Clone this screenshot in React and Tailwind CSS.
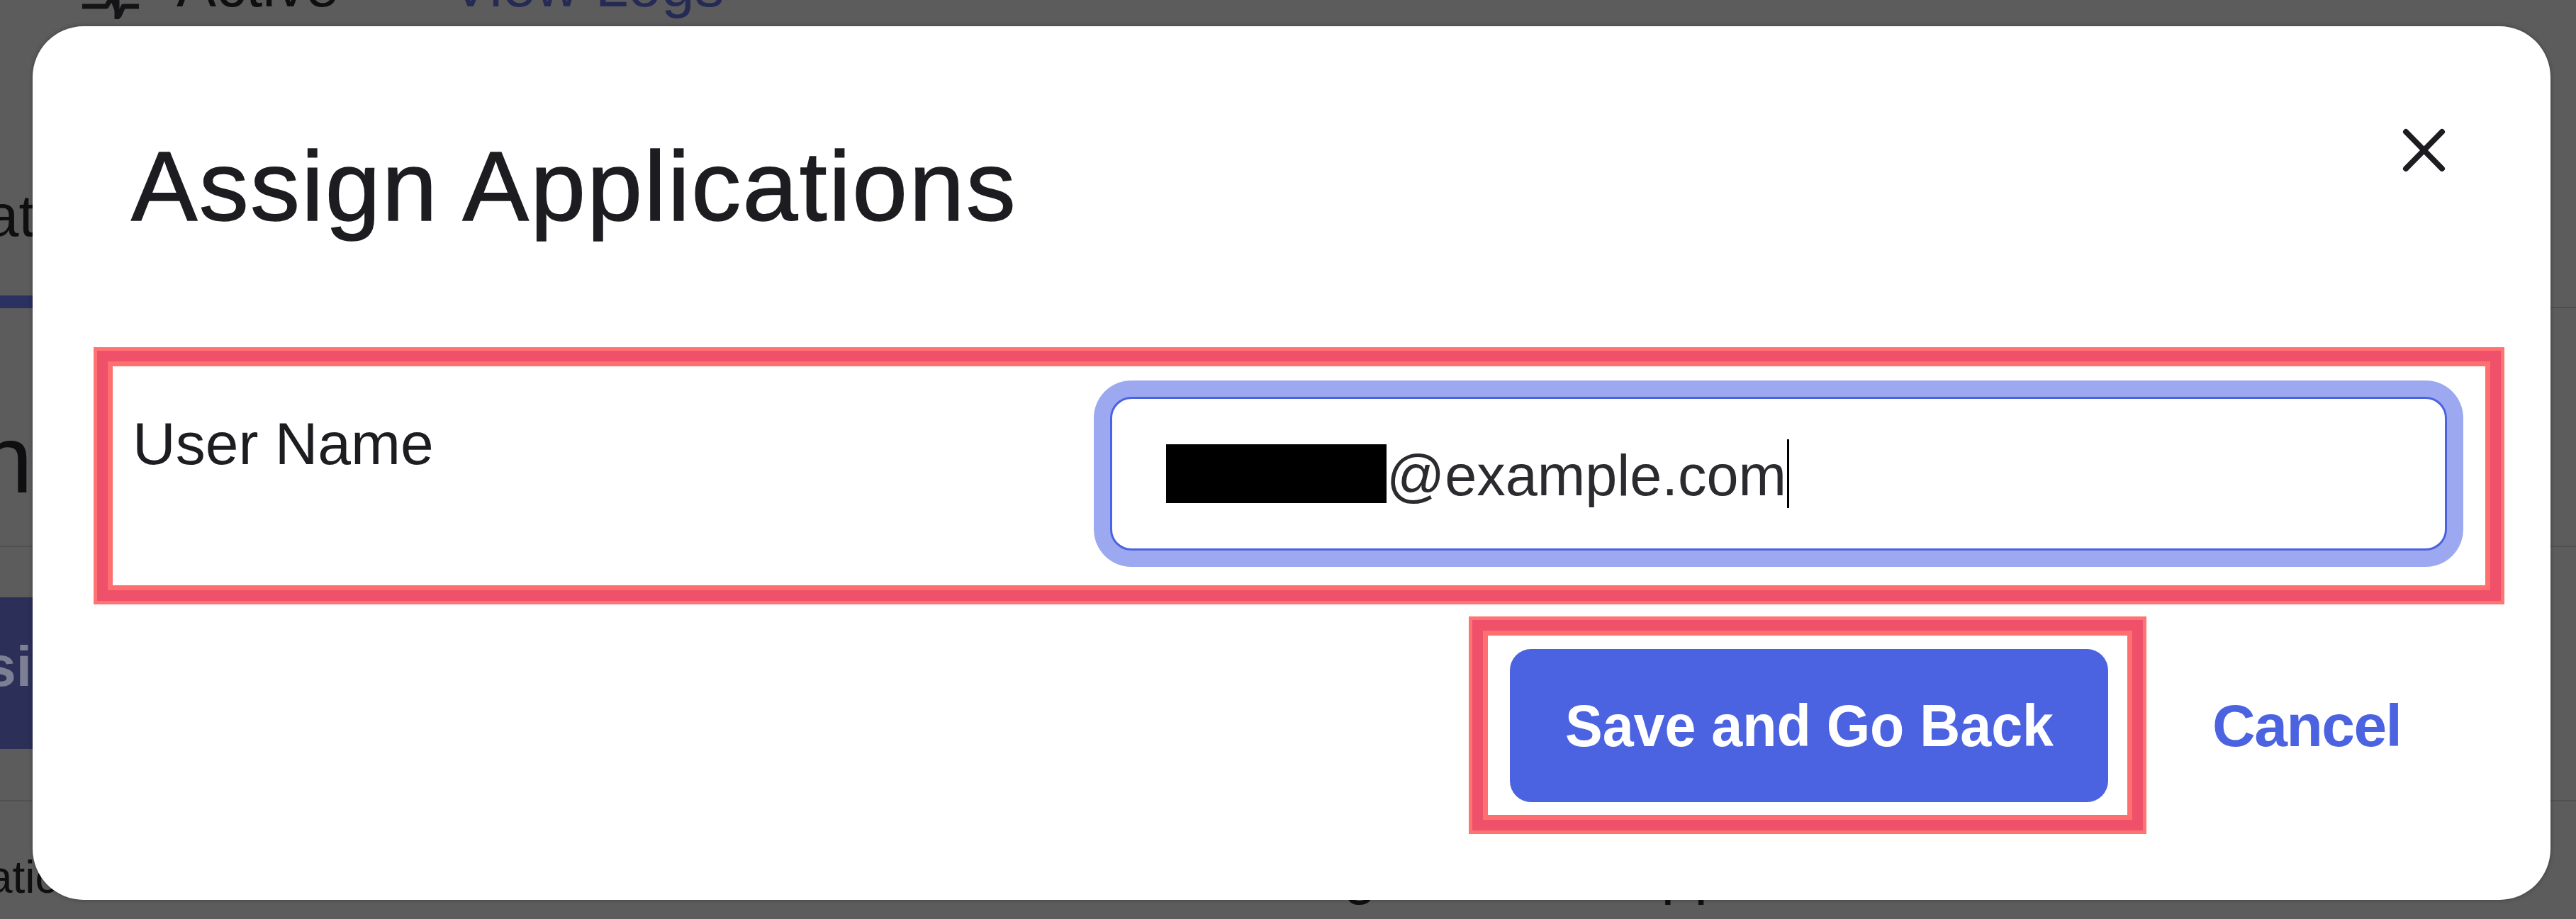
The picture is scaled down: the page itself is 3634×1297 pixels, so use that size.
import React from "react";

const ink = "text-[#1d1d21]";

function CloseIcon() {
  return (
    <svg width="63" height="62" viewBox="0 0 63 62" fill="none" aria-hidden="true">
      <line x1="6" y1="5" x2="57" y2="57" stroke="#1d1d21" strokeWidth="8" strokeLinecap="round" />
      <line x1="57" y1="5" x2="6" y2="57" stroke="#1d1d21" strokeWidth="8" strokeLinecap="round" />
    </svg>
  );
}

function StatusIcon() {
  return (
    <svg width="80" height="89" viewBox="0 0 80 89" fill="none" aria-hidden="true">
      <path d="M0 71 H34 L42 58 L52 84 L58 71 H80" stroke="#141416" strokeWidth="7" strokeLinejoin="round" />
      <line x1="49" y1="40" x2="49" y2="89" stroke="#141416" strokeWidth="7" />
    </svg>
  );
}

function BackgroundPage() {
  return (
    <div className="flex flex-col text-[#0f0f11]">
      {/* status bar */}
      <div className="-mt-[62px] flex h-[89px] items-start pl-[116px] text-[84px] leading-none">
        <StatusIcon />
        <span className="ml-[53px]">Active</span>
        <span className="ml-[158px] text-[#262b55]">View Logs</span>
      </div>

      {/* tabs */}
      <div className="mt-[235px] flex border-b-2 border-[#4f4f4f]">
        <div className="-mb-[2px] ml-[-249px] w-[520px] border-b-[18px] border-[#2b3160] pb-[71px] text-[84px] leading-none">
          Applicati
        </div>
      </div>

      {/* section heading */}
      <div className="ml-[-359px] mt-[146px] text-[135px] leading-none">Assign</div>
      <div className="mt-[54px] h-[2px] bg-[#505050]" />

      {/* action button */}
      <div className="mt-[71px] flex h-[214px] w-[700px] items-center ml-[-184px] bg-[#2c3058] pb-[18px] pl-[60px] text-[80px] font-bold leading-none text-[#7d8094]">
        Assign
      </div>
      <div className="mt-[72px] h-[2px] bg-[#505050]" />

      {/* table row */}
      <div className="mt-[58px] flex items-baseline leading-none">
        <span className="ml-[-203px] text-[64px]">Automatic</span>
        <span className="ml-[1655px] text-[84px]">Assign user to Applications</span>
      </div>
    </div>
  );
}

export default function App() {
  return (
    <div className="relative h-[1297px] w-[3634px] overflow-hidden bg-[#5c5c5c] font-['Liberation_Sans',Arial,sans-serif]">
      <BackgroundPage />

      {/* dialog */}
      <div className="absolute left-[46px] top-[37px] flex h-[1233px] w-[3552px] flex-col rounded-[72px] bg-white pl-[91px] pr-[70px] shadow-[0_0_6px_rgba(0,0,0,0.3)]">
        <div className="flex items-start justify-between pt-[144px]">
          <h2 className={`ml-[48px] mt-[12px] text-[140px] font-normal leading-none tracking-[2.3px] [-webkit-text-stroke:1.5px_#1d1d21] ${ink}`}>
            Assign Applications
          </h2>
          <button type="button" className="mr-[77px] flex h-[62px] w-[63px] items-center justify-center">
            <CloseIcon />
          </button>
        </div>

        {/* user name field */}
        <div className="mt-[162px] border-[15px] border-[#ef506a] pb-[56px] pl-[35px] pr-[61px] pt-[50px] shadow-[0_0_0_5px_#ff7373,inset_0_0_0_7px_#ff6f6f]">
          <div className="flex items-start">
            <label className={`mt-[24px] w-[1379px] flex-none text-[84px] leading-none ${ink}`}>User Name</label>
            <div className="flex h-[217px] flex-1 items-center rounded-[30px] border-[3px] border-[#4b63e0] bg-white pl-[76px] shadow-[0_0_0_23px_#9ca8ef]">
              <span className="h-[83px] w-[311px] flex-none bg-black" />
              <span className="mt-[6px] text-[81px] leading-none text-[#2b2b2f]">@example.com</span>
              <span className="ml-[1px] h-[97px] w-[3px] bg-black" />
            </div>
          </div>
        </div>

        {/* actions */}
        <div className="mt-[27px] flex items-center pl-[1940px]">
          <div className="border-[15px] border-[#ef506a] pb-[25px] pl-[38px] pr-[34px] pt-[26px] shadow-[0_0_0_5px_#ff7373,inset_0_0_0_7px_#ff6f6f]">
            <button type="button" className="flex h-[216px] w-[844px] items-center justify-center rounded-[30px] bg-[#4b63e0] text-[84px] font-bold leading-none text-white">
              <span className="inline-block scale-x-[0.94] whitespace-nowrap">Save and Go Back</span>
            </button>
          </div>
          <button type="button" className="ml-[98px] text-[84px] font-bold leading-none tracking-[-1.5px] text-[#4b63e0]">
            Cancel
          </button>
        </div>
      </div>
    </div>
  );
}
